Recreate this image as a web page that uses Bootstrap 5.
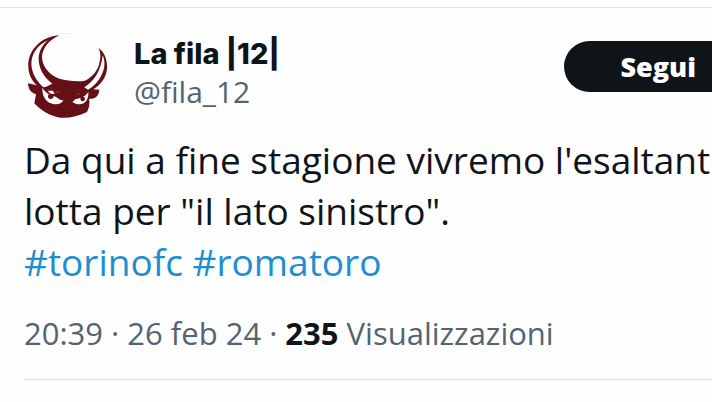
<!DOCTYPE html>
<html lang="it">
<head>
<meta charset="utf-8">
<meta name="viewport" content="width=device-width, initial-scale=1">
<title>La fila |12|</title>
<link href="https://cdn.jsdelivr.net/npm/bootstrap@5.3.0/dist/css/bootstrap.min.css" rel="stylesheet">
<style>
  body { font-family: "Open Sans", "Noto Sans", sans-serif; color: #0f1419; background: #fefefe; }
  .post { margin-top: 7px; border-top: 1px solid #e0e0e0; padding: 24px 0 0 24px; }
  .avatar { width: 84px; height: 86px; }
  .author { margin-left: 26px; padding-top: 3px; }
  .author-name { font-family: Inter, "Open Sans", sans-serif; font-size: 29px; line-height: 38px; font-weight: 800; color: #0f1419; }
  .handle { font-size: 30px; line-height: 38px; color: #536471; }
  .follow { margin: 9px -24px 0 0; padding: 0 40px 0 56px; height: 51px; border-radius: 26px 0 0 26px; background: #0f1419; color: #fff; font-size: 27px; line-height: 50px; font-weight: 800; }
  .follow:hover { background: #272c30; color: #fff; }
  .post-text { margin-top: 16px; font-size: 37px; line-height: 51px; }
  .post-text a { color: #1d8fd1; }
  .meta { margin-top: 22px; padding-bottom: 22px; font-size: 31px; line-height: 48px; color: #536471; border-bottom: 1px solid #dedede; }
  .meta strong { color: #0f1419; }
</style>
</head>
<body class="overflow-hidden">
<article class="post">
  <header class="d-flex align-items-start">
    <svg class="avatar flex-shrink-0" viewBox="24 24 252 258" role="img" aria-label="La fila 12">
      <path fill="#650f17" d="M130 34C84 37 43 68 37 116C35 146 45 166 62 184L36 178C37 194 43 206 60 211L55 238C76 260 103 277 134 281C159 283 186 277 213 264C219 252 222 240 219 225C239 224 248 217 250 197L232 196C254 181 270 163 273 134C275 109 266 84 247 71C253 81 255 96 251 113C247 138 230 158 207 170C180 174 155 170 130 164C104 154 78 130 78 98C80 71 98 49 130 34Z"/>
      <g fill="#fff">
        <path d="M96 49C64 64 47 88 46 119C47 147 60 168 82 190C90 189 98 185 109 179C82 158 67 131 68 101C70 80 79 63 96 49Z"/>
        <path d="M260 94C268 111 267 133 257 152C248 172 233 187 216 197L205 190C235 171 255 140 260 94Z"/>
        <path d="M79 191C88 205 102 215 119 218C127 223 132 229 142 229C137 239 126 242 112 240C91 236 78 218 79 191Z"/>
        <path d="M217 204C208 218 194 223 179 225L169 234C181 242 194 243 204 237C215 230 218 218 217 204Z"/>
        <path d="M95 200h16l5 9-12 1Z"/>
      </g>
      <g fill="#650f17"><circle cx="104" cy="217" r="8"/><circle cx="200" cy="225" r="7"/></g>
      <path d="M119 207l8-4 5 4M182 214l5-5 6 3" fill="none" stroke="#8d444b" stroke-width="3"/>
      <path d="M130 29h38" stroke="#e8e4e4" stroke-width="2"/>
    </svg>
    <div class="author flex-grow-1">
      <div class="author-name">La fila |12|</div>
      <a class="handle d-block text-decoration-none" href="#">@fila_12</a>
    </div>
    <button type="button" class="follow btn border-0 flex-shrink-0">Segui</button>
  </header>
  <p class="post-text mb-0 text-nowrap">Da qui a fine stagione vivremo l'esaltante<br>lotta per "il lato sinistro".<br><a class="text-decoration-none" href="#">#torinofc</a> <a class="text-decoration-none" href="#">#romatoro</a></p>
  <div class="meta text-nowrap">20:39 · 26 feb 24 · <strong>235</strong> Visualizzazioni</div>
</article>
<script src="https://cdn.jsdelivr.net/npm/bootstrap@5.3.0/dist/js/bootstrap.bundle.min.js"></script>
</body>
</html>
